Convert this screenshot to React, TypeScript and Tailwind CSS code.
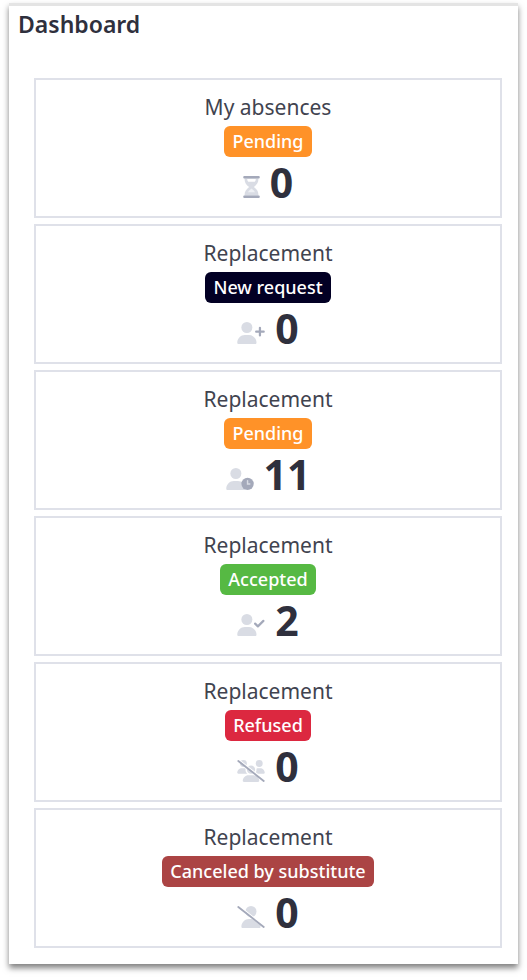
import * as React from "react"

type IconName = "hourglass" | "plus" | "clock" | "check" | "usersSlash" | "userSlash"

const cards: { id: string; title: string; status: string; badge: string; icon: IconName; count: number }[] = [
  { id: "absences", title: "My absences", status: "Pending", badge: "bg-[#ff9228]", icon: "hourglass", count: 0 },
  { id: "new", title: "Replacement", status: "New request", badge: "bg-[#020024]", icon: "plus", count: 0 },
  { id: "pending", title: "Replacement", status: "Pending", badge: "bg-[#ff9228]", icon: "clock", count: 11 },
  { id: "accepted", title: "Replacement", status: "Accepted", badge: "bg-[#56b943]", icon: "check", count: 2 },
  { id: "refused", title: "Replacement", status: "Refused", badge: "bg-[#dc2840]", icon: "usersSlash", count: 0 },
  { id: "canceled", title: "Replacement", status: "Canceled by substitute", badge: "bg-[#ab4444]", icon: "userSlash", count: 0 },
]

const LIGHT = "#d9dce4"
const DARK = "#a4a9ba"

function User() {
  return (
    <g fill={LIGHT}>
      <circle cx="224" cy="128" r="128" />
      <path d="M0 482C0 384 80 304 178 304h92c98 0 178 80 178 178 0 17-13 30-30 30H30c-17 0-30-13-30-30z" />
    </g>
  )
}

function Slash() {
  return (
    <g fill="none" strokeLinecap="round">
      <path d="M50 2 640 464" stroke="#fff" strokeWidth="24" />
      <path d="M24 24 616 488" stroke={DARK} strokeWidth="44" />
    </g>
  )
}

function StatusIcon({ name }: { name: IconName }) {
  if (name === "hourglass") {
    return (
      <svg viewBox="0 0 384 512" className="h-[22px] w-[17px]" aria-hidden="true">
        <path
          d="M32 50h320v36c0 66-40 120-104 170 64 50 104 104 104 170v36H32v-36c0-66 40-120 104-170C72 206 32 152 32 86z"
          fill={LIGHT}
        />
        <path d="M92 68h200c0 26-8 48-24 68H116c-16-20-24-42-24-68z" fill="#fff" />
        <path d="M192 292c36 28 66 56 82 86H110c16-30 46-58 82-86z" fill="#eef0f4" />
        <rect width="384" height="58" rx="24" fill={DARK} />
        <rect y="454" width="384" height="58" rx="24" fill={DARK} />
      </svg>
    )
  }

  return (
    <svg viewBox="0 0 640 512" className="h-[22px] w-7" aria-hidden="true">
      {name === "plus" && (
        <>
          <User />
          <path d="M528 136v176M440 224h176" stroke={DARK} strokeWidth="52" strokeLinecap="round" />
        </>
      )}
      {name === "clock" && (
        <>
          <User />
          <circle cx="496" cy="368" r="144" fill={DARK} />
          <path d="M496 296v76h52" fill="none" stroke={LIGHT} strokeWidth="34" strokeLinecap="round" />
        </>
      )}
      {name === "check" && (
        <>
          <User />
          <path
            d="m416 224 64 64 128-128"
            fill="none"
            stroke={DARK}
            strokeWidth="50"
            strokeLinecap="round"
            strokeLinejoin="round"
          />
        </>
      )}
      {name === "usersSlash" && (
        <>
          <g fill={LIGHT}>
            <circle cx="144" cy="80" r="80" />
            <circle cx="512" cy="80" r="80" />
            <circle cx="320" cy="224" r="96" />
            <path d="M0 299c0-59 48-107 107-107h42c16 0 31 4 45 10-1 7-2 14-2 22 0 38 17 72 43 96H21c-11 0-21-10-21-21z" />
            <path d="M405 320c26-24 43-58 43-96 0-8-1-15-2-22 14-6 29-10 45-10h42c59 0 107 48 107 107 0 11-10 21-21 21z" />
            <path d="M128 485c0-73 60-133 133-133h118c73 0 133 60 133 133 0 15-12 27-27 27H155c-15 0-27-12-27-27z" />
          </g>
          <Slash />
        </>
      )}
      {name === "userSlash" && (
        <>
          <g fill={LIGHT}>
            <circle cx="320" cy="128" r="128" />
            <path d="M96 482c0-98 80-178 178-178h74l184 144 12 34c0 17-13 30-30 30H126c-17 0-30-13-30-30z" />
          </g>
          <Slash />
        </>
      )}
    </svg>
  )
}

export default function App() {
  return (
    <div className="bg-white px-[9px] pt-[3px] pb-[15px] font-['Noto_Sans',sans-serif] text-[#2f303d]">
      <main className="border-t-3 border-[#e4e4e4] bg-white pr-4 pb-4 pl-[25px] shadow-[0_4px_6px_0_rgba(0,0,0,0.5)]">
        <h1 className="-ml-4 text-[23px] leading-9 font-semibold">Dashboard</h1>
        <div className="mt-9 flex flex-col gap-1.5">
          {cards.map(card => (
            <section
              key={card.id}
              className="flex flex-col items-center border-2 border-[#dfe1e9] px-4 pt-3 pb-[9px]"
            >
              <h2 className="text-[21px] leading-[30px] text-[#41434f]">{card.title}</h2>
              <span className={`mt-1 rounded-md px-2 text-[18px] leading-[31px] font-medium text-white ${card.badge}`}>
                {card.status}
              </span>
              <div className="flex items-baseline gap-2.5 text-[41px] leading-[50px] font-bold">
                <StatusIcon name={card.icon} />
                <span>{card.count}</span>
              </div>
            </section>
          ))}
        </div>
      </main>
    </div>
  )
}
